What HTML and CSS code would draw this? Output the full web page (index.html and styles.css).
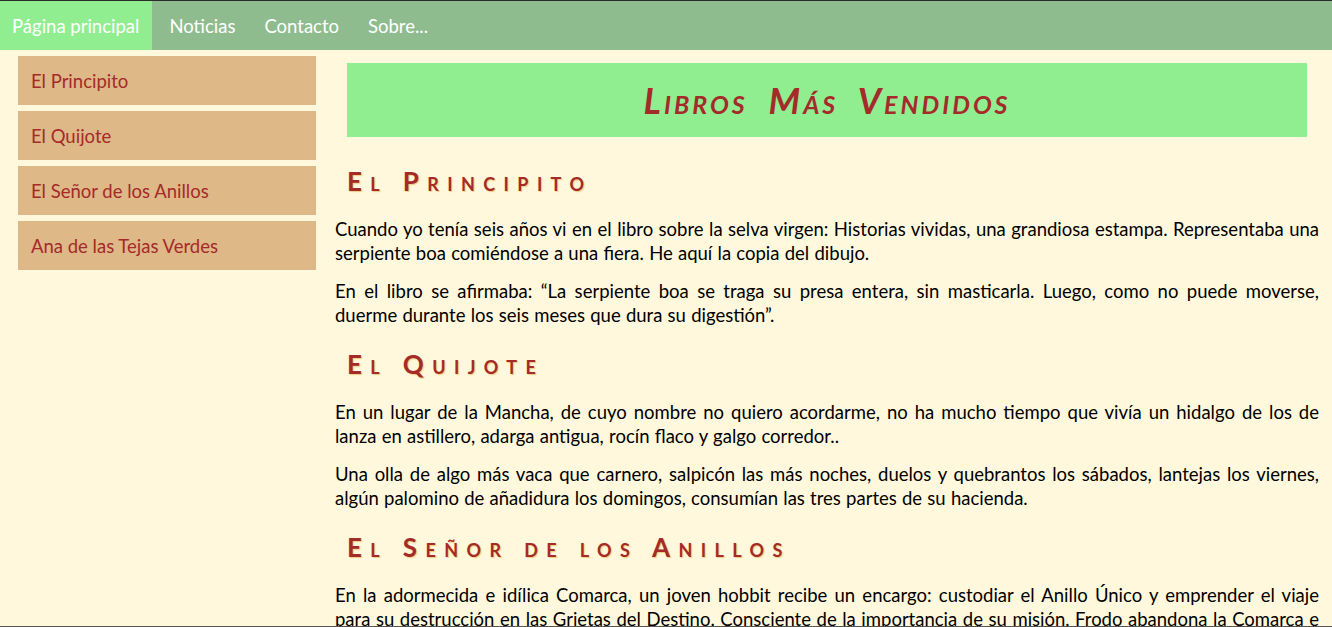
FILE: index.html
```html
<!DOCTYPE html>
<html lang="es">
<head>
<meta charset="utf-8">
<title>Libros Más Vendidos</title>
<link rel="stylesheet" href="styles.css">
</head>
<body>
<nav class="topnav">
  <a class="nav-item active" href="#">Página principal</a>
  <a class="nav-item" href="#">Noticias</a>
  <a class="nav-item" href="#">Contacto</a>
  <a class="nav-item" href="#">Sobre...</a>
</nav>
<div class="layout">
  <aside class="sidebar">
    <a class="side-item" href="#">El Principito</a>
    <a class="side-item" href="#">El Quijote</a>
    <a class="side-item" href="#">El Señor de los Anillos</a>
    <a class="side-item" href="#">Ana de las Tejas Verdes</a>
  </aside>
  <main class="content">
    <h1 class="title">Libros Más Vendidos</h1>
    <h2 class="book">El Principito</h2>
    <p>Cuando yo tenía seis años vi en el libro sobre la selva virgen: Historias vividas, una grandiosa estampa. Representaba una serpiente boa comiéndose a una fiera. He aquí la copia del dibujo.</p>
    <p>En el libro se afirmaba: “La serpiente boa se traga su presa entera, sin masticarla. Luego, como no puede moverse, duerme durante los seis meses que dura su digestión”.</p>
    <h2 class="book">El Quijote</h2>
    <p>En un lugar de la Mancha, de cuyo nombre no quiero acordarme, no ha mucho tiempo que vivía un hidalgo de los de lanza en astillero, adarga antigua, rocín flaco y galgo corredor..</p>
    <p>Una olla de algo más vaca que carnero, salpicón las más noches, duelos y quebrantos los sábados, lantejas los viernes, algún palomino de añadidura los domingos, consumían las tres partes de su hacienda.</p>
    <h2 class="book">El Señor de los Anillos</h2>
    <p>En la adormecida e idílica Comarca, un joven hobbit recibe un encargo: custodiar el Anillo Único y emprender el viaje para su destrucción en las Grietas del Destino. Consciente de la importancia de su misión, Frodo abandona la Comarca e inicia un largo camino lleno de peligros y aventuras.</p>
  </main>
</div>
<div class="frame-bottom"></div>
</body>
</html>
```

FILE: styles.css
```css
html, body {
  margin: 0;
  padding: 0;
}

body {
  background: #FFF8DC;
  font-family: Lato, "Open Sans", sans-serif;
  color: #000;
  border-top: 1px solid #2a2a2a;
}

.topnav {
  display: flex;
  height: 49px;
  background: #8FBC8F;
  gap: 5px;
}

.nav-item {
  display: flex;
  align-items: center;
  padding: 0 12px;
  color: #fff;
  text-decoration: none;
  font-size: 18.5px;
}

.nav-item.active {
  background: #90EE90;
  padding-right: 13px;
}

.layout {
  display: flex;
  align-items: flex-start;
}

.sidebar {
  flex: 0 0 298px;
  margin-left: 18px;
  padding-top: 6px;
  display: flex;
  flex-direction: column;
  gap: 6px;
}

.side-item {
  display: flex;
  align-items: center;
  height: 49px;
  padding-left: 13px;
  background: #DEB887;
  color: #A52A2A;
  text-decoration: none;
  font-size: 18.5px;
}

.content {
  flex: 0 0 984px;
  margin-left: 19px;
}

.title {
  margin: 13px 12px 28px;
  height: 74px;
  display: flex;
  align-items: center;
  justify-content: center;
  background: #90EE90;
  color: #A52A2A;
  font-size: 36px;
  font-style: italic;
  font-weight: bold;
  font-variant: small-caps;
  letter-spacing: 3px;
  word-spacing: 10px;
}

.book {
  margin: 21px 12px 20px;
  color: #A52A2A;
  font-size: 26px;
  font-weight: bold;
  font-variant: small-caps;
  letter-spacing: 8.4px;
  text-shadow: 1px 1px 1px rgba(218, 165, 32, 0.5);
}

.content p {
  margin: 14px 0;
  font-size: 18.5px;
  line-height: 24px;
  word-spacing: 0.5px;
  text-align: justify;
}

.frame-bottom {
  position: fixed;
  left: 0;
  right: 0;
  bottom: 0;
  height: 1px;
  background: #555;
}
```
